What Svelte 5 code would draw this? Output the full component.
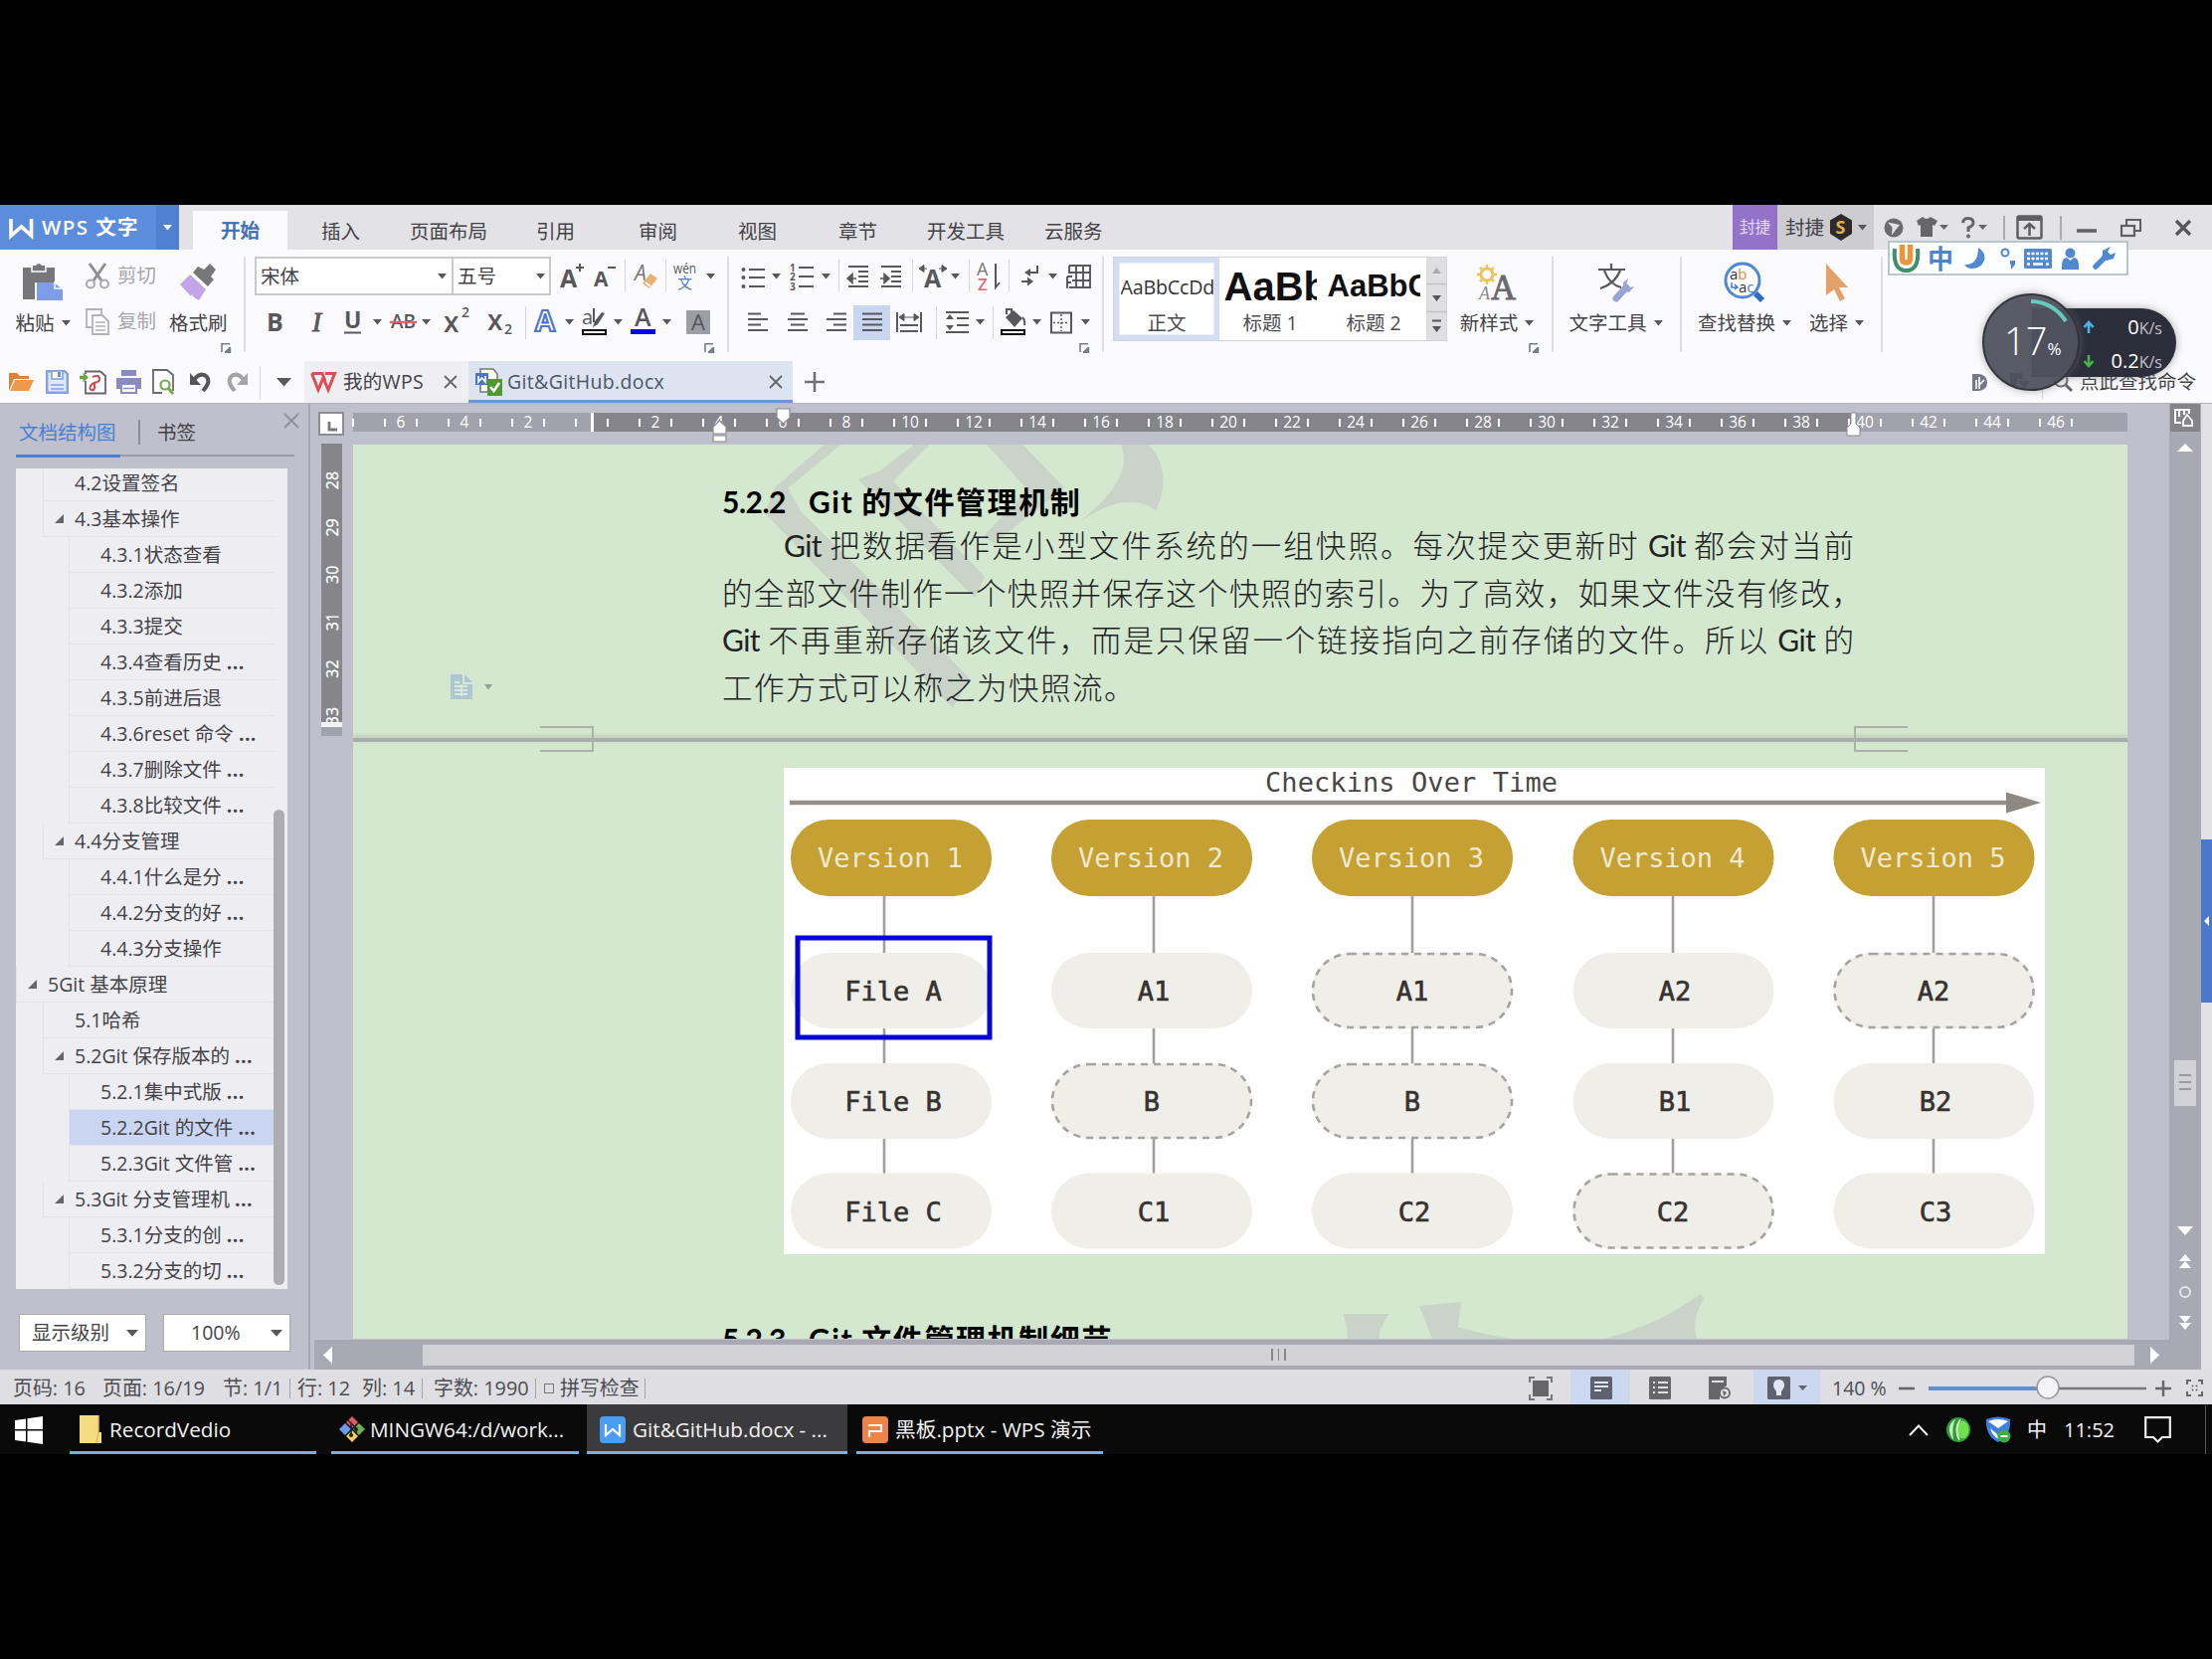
<script>
  // Icon library: [width, height, svg body]
  const G = '#58585c';
  const lines = (rows) => rows.map(([x1, x2, y]) => `<path d="M${x1} ${y}H${x2}" stroke="${G}" stroke-width="2"/>`).join('');
  const icons = {
    caret: [9, 6, `<path d="M0 0H9L4.5 5.5Z" fill="${G}"/>`],
    bigCaret: [15, 9, `<path d="M0 0H15L7.5 8.5Z" fill="${G}"/>`],
    whiteCaret: [9, 6, '<path d="M0 0H9L4.5 5.5Z" fill="#fff"/>'],
    logo: [25, 20, '<path d="M2 1V18L12.500 9L22.500 18V1" fill="none" stroke="#fff" stroke-width="3.600"/>'],
    paste: [40, 40, '<path d="M0 5H10V3H13Q16 -1 19 3H22V5H32V20H12V37H0Z" fill="#77777a"/><path d="M9 5V9H23V5" fill="none" stroke="#fbfbfd" stroke-width="1.500"/><path d="M14 20H31L40 27V38H14Z" fill="#7f9de6"/><path d="M32 19V26H40" fill="none" stroke="#fbfbfd" stroke-width="1.500"/>'],
    cut: [24, 27, '<path d="M4 1L16 18M20 1L8 18" stroke="#8f8f93" stroke-width="3"/><circle cx="5" cy="21.500" r="4" fill="none" stroke="#a9a9ad" stroke-width="2"/><circle cx="19" cy="21.500" r="4" fill="none" stroke="#a9a9ad" stroke-width="2"/>'],
    copy: [24, 27, '<path d="M6 19H1V1H16V6" fill="none" stroke="#b3b3b7" stroke-width="1.800"/><path d="M7 7H17L23 13V26H7Z" fill="#fbfbfd" stroke="#b3b3b7" stroke-width="1.800"/><path d="M10 14H20M10 18H20M10 22H20" stroke="#b3b3b7" stroke-width="1.500"/>'],
    brush: [38, 38, '<path d="M25 6L31 0L37 6L32 13L35 16L29 23L14 9L19 3Z" fill="#77777a"/><path d="M11 11L27 26L20 37L15 34L13 31L12 33L1 21Z" fill="#c3a4ea"/>'],
    launch: [9, 10, '<path d="M0 9V0.800H8" fill="none" stroke="#777c90" stroke-width="1.600"/><path d="M3 9H8.200V4M4 9L8 5" fill="none" stroke="#777c90" stroke-width="2"/>'],
    bold: [18, 26, `<text x="0" y="22" font-size="25" font-weight="700" fill="${G}">B</text>`],
    italic: [16, 26, `<text x="2" y="22" font-size="27" font-style="italic" font-family="Liberation Serif" stroke="${G}" stroke-width=".9" fill="${G}">I</text>`],
    under: [18, 26, `<text x="0" y="19" font-size="23" font-weight="700" fill="${G}">U</text><path d="M0 23.500H17" stroke="${G}" stroke-width="2"/>`],
    strike: [28, 24, `<text x="1" y="18" font-size="19" font-weight="600" textLength="25" lengthAdjust="spacingAndGlyphs" fill="${G}">AB</text><path d="M0 12H27" stroke="#d9666a" stroke-width="2.400"/>`],
    sup: [28, 28, `<text x="0" y="24" font-size="28" font-weight="600" fill="${G}">x</text><text x="18" y="9" font-size="14" font-weight="600" fill="${G}">2</text>`],
    sub: [28, 28, `<text x="0" y="22" font-size="28" font-weight="600" fill="${G}">x</text><text x="17" y="26" font-size="14" font-weight="600" fill="${G}">2</text>`],
    outA: [24, 26, '<text x="1" y="22" font-size="29" font-weight="700" fill="#fff" stroke="#4f76cf" stroke-width="2.200">A</text>'],
    hilite: [26, 28, `<text x="0" y="16" font-size="20" fill="${G}">a</text><path d="M12 0V14" stroke="${G}" stroke-width="2"/><path d="M23 5L16 16L11 19L13 13L20 4Z" fill="${G}"/><rect x="1" y="22" width="23" height="4" fill="#fff" stroke="#111" stroke-width="2"/>`],
    colorA: [26, 28, `<text x="4" y="18" font-size="25" font-weight="600" fill="${G}">A</text><rect x="0" y="21" width="25" height="5" fill="#0808ee"/>`],
    boxA: [24, 24, '<rect width="24" height="24" fill="#9d9da4"/><text x="5" y="20" font-size="22" fill="#55555a">A</text>'],
    grow: [26, 28, `<text x="0" y="25" font-size="25" font-weight="700" fill="${G}">A</text><path d="M16 5H24M20 1V9" stroke="${G}" stroke-width="2"/>`],
    shrink: [26, 28, `<text x="0" y="24" font-size="21" font-weight="700" fill="${G}">A</text><path d="M14 5H22" stroke="${G}" stroke-width="2"/>`],
    eraser: [24, 28, '<text x="0" y="18" font-size="21" font-style="italic" fill="#77777b">A</text><path d="M16 11L23 16L15 26L8 21Z" fill="#e8b06e"/><path d="M11 20L16 24" stroke="#fff" stroke-width="2"/>'],
    wen: [24, 30, `<text x="0" y="12" font-size="15" textLength="23" lengthAdjust="spacingAndGlyphs" fill="${G}">wén</text><text x="4" y="27" font-size="15" fill="#4f7fd6">文</text>`],
    bullets: [24, 28, `${lines([[8, 24, 7], [8, 24, 15], [8, 24, 24]])}<circle cx="2.500" cy="7" r="2" fill="${G}"/><circle cx="2.500" cy="15" r="2" fill="${G}"/><circle cx="2.500" cy="24" r="2" fill="${G}"/>`],
    numbers: [24, 30, `${lines([[9, 24, 6], [9, 24, 15], [9, 24, 25]])}<text x="0" y="10" font-size="10" font-weight="700" fill="${G}">1</text><text x="0" y="19" font-size="10" font-weight="700" fill="${G}">2</text><text x="0" y="29" font-size="10" font-weight="700" fill="${G}">3</text>`],
    outdent: [22, 24, `${lines([[1, 21, 2], [11, 21, 7], [11, 21, 12], [11, 21, 17], [1, 21, 22]])}<path d="M0 14L5 9.500V18.500ZM4 14H9" fill="${G}" stroke="${G}" stroke-width="1.500"/>`],
    indent: [22, 24, `${lines([[1, 21, 2], [11, 21, 7], [11, 21, 12], [11, 21, 17], [1, 21, 22]])}<path d="M9 14L4 9.500V18.500ZM5 14H0" fill="${G}" stroke="${G}" stroke-width="1.500"/>`],
    charScale: [28, 26, `<text x="5" y="24" font-size="25" font-weight="700" fill="${G}">A</text><path d="M0 5L5 1.500V8.500ZM28 5L23 1.500V8.500ZM4 5H8M20 5H24" fill="${G}" stroke="${G}" stroke-width="1"/>`],
    sort: [25, 28, `<text x="1" y="13" font-size="18" fill="#77777b">A</text><text x="2" y="28" font-size="17" font-weight="600" fill="#dc6c74">Z</text><path d="M20 1V25L24 20" fill="none" stroke="${G}" stroke-width="2"/>`],
    marks: [18, 24, `<path d="M16 1V8H6M0 17H9" fill="none" stroke="${G}" stroke-width="2"/><path d="M3 8L9 4V12ZM12 17L6 12.500V21.500Z" fill="${G}"/>`],
    tableGrid: [25, 26, `<path d="M3 2H24V24H3M10 2V24M17 2V24M3 2V10M3 9H24M6 17H24M1 13V25M1 13H6M1 19H5" fill="none" stroke="${G}" stroke-width="1.900"/>`],
    alignL: [22, 20, lines([[1, 14, 1.5], [1, 21, 7], [1, 14, 12.5], [1, 21, 18]])],
    alignC: [22, 20, lines([[4, 18, 1.5], [1, 21, 7], [4, 18, 12.5], [1, 21, 18]])],
    alignR: [22, 20, lines([[8, 21, 1.5], [1, 21, 7], [8, 21, 12.5], [1, 21, 18]])],
    alignJ: [22, 20, lines([[1, 21, 1.5], [1, 21, 7], [1, 21, 12.5], [1, 21, 18]])],
    distribute: [26, 22, `<path d="M1 1V21M25 1V21" stroke="${G}" stroke-width="2"/>${lines([[4, 22, 14], [4, 22, 20]])}<path d="M3 6L8 2.500V9.500ZM23 6L18 2.500V9.500ZM8 6H18" fill="${G}" stroke="${G}"/>`],
    spacing: [24, 24, `${lines([[1, 24, 2], [12, 24, 8], [12, 24, 15], [1, 24, 22]])}<path d="M5 4L9 9H1ZM5 20L9 15H1Z" fill="${G}"/>`],
    bucket: [26, 28, `<path d="M5 9L13 2L22 10L14 19Z" fill="${G}"/><path d="M6 6V1H11V6M22 9Q25 12 24 17" fill="none" stroke="${G}" stroke-width="2"/><rect x="1" y="22" width="23" height="4" fill="#fff" stroke="#111" stroke-width="2"/>`],
    border: [22, 23, `<rect x="1" y="1.500" width="20" height="20" fill="none" stroke="${G}" stroke-width="2"/><path d="M11 3V20M3 11.500H19" stroke="${G}" stroke-width="1.500" stroke-dasharray="2 2"/>`],
    newStyle: [40, 38, `<circle cx="10" cy="11" r="6" fill="none" stroke="#f0c25a" stroke-width="3"/><path d="M10 1V4M10 18V21M0 11H3M17 11H20M3 4L5 6M15 16L17 18M17 4L15 6M5 16L3 18" stroke="#f0c25a" stroke-width="2.500"/><text x="2" y="36" font-size="18" font-style="italic" font-family="Liberation Serif" fill="#8b8b90">A</text><text x="14" y="36" font-size="36" font-family="Liberation Serif" stroke="#6a6a6e" fill="#6a6a6e" textLength="25" lengthAdjust="spacingAndGlyphs">A</text>`],
    textTool: [36, 38, `<path d="M13 0V6M0 6H27M6 7Q11 21 23 24M22 7Q17 20 2 25" fill="none" stroke="${G}" stroke-width="2.200"/><path d="M18 35L28 24" stroke="#9ba5d3" stroke-width="7" stroke-linecap="round"/><path d="M30 15L25 19V27L31 29L36 23L31 24L28 22Z" fill="#9ba5d3"/>`],
    find: [42, 42, `<circle cx="19" cy="19" r="17" fill="#fff" stroke="#4d87d6" stroke-width="3"/><path d="M32 32L39 39" stroke="#2f6cc8" stroke-width="6"/><text x="6" y="18" font-size="15" fill="#333">a<tspan fill="#e08a3c">b</tspan></text><text x="15" y="31" font-size="15" fill="#333">a<tspan fill="#3f7fd6">c</tspan></text><path d="M8 21V26H14M11 23L14 26L11 28" stroke="#3f7fd6" stroke-width="1.500" fill="none"/>`],
    select: [24, 38, '<path d="M1 0L23 24H14L20 35L15 38L9 26L1 32Z" fill="#e3a069"/>'],
    globe: [20, 20, '<circle cx="10" cy="10" r="9.500" fill="#6b6b6f"/><path d="M4 4.500L16 7L12 12L8 17.500L8.500 9.500Z" fill="#e3e2e6"/>'],
    shirt: [21, 21, '<path d="M6 0Q10 4 14 0L21 4L18 9L16 8V20H4V8L2 9L0 4Z" fill="#66666a"/>'],
    smallCaret: [9, 6, `<path d="M0 0H9L4.500 5Z" fill="#66666a"/>`],
    help: [14, 22, '<path d="M1.500 6Q2 1.500 7 1.500Q12 1.500 12 6Q12 9 7 11V15" fill="none" stroke="#66666a" stroke-width="3"/><circle cx="7" cy="19.500" r="2" fill="#66666a"/>'],
    upBox: [27, 25, '<rect x="1.500" y="1.500" width="24" height="22" rx="1.500" fill="none" stroke="#5f5f63" stroke-width="2.500"/><path d="M1 4H26" stroke="#5f5f63" stroke-width="4"/><path d="M13.500 21V10M8 14L13.500 9L19 14" fill="none" stroke="#5f5f63" stroke-width="2.500"/>'],
    mini: [20, 20, '<path d="M0 13H20" stroke="#5f5f63" stroke-width="3.500"/>'],
    restore: [21, 18, '<path d="M6 6V1H20V12H15" fill="none" stroke="#5f5f63" stroke-width="2"/><rect x="1" y="7" width="13" height="10" fill="none" stroke="#5f5f63" stroke-width="2.200"/>'],
    close: [18, 18, '<path d="M2 2L16 16M16 2L2 16" stroke="#55555a" stroke-width="3.200"/>'],
    hex: [24, 27, '<path d="M12 0L23 6.500V20L12 27L1 20V6.500Z" fill="#2e2a2a"/><text x="6.500" y="20" font-size="18" font-weight="700" fill="#e6b04a">S</text>'],
    open: [26, 20, '<path d="M1 19V1H9L12 4H21V7H6Z" fill="#d98439"/><path d="M7 8H26L21 19H2Z" fill="#ec9a4c"/>'],
    save: [23, 24, '<path d="M1.200 1.200H19L21.800 4V22.800H1.200Z" fill="#dfe8fb" stroke="#86a0e0" stroke-width="2.400"/><rect x="6" y="1" width="11" height="8" fill="#fff" stroke="#86a0e0" stroke-width="1.600"/><rect x="12" y="2" width="3" height="5" fill="#6f8fd8"/><path d="M5 15H18M5 19H18" stroke="#86a0e0" stroke-width="1.600"/>'],
    pdf: [27, 25, `<path d="M6 11V23.500H26V6L21 1.500H6V4" fill="#fff" stroke="#67676b" stroke-width="1.800"/><path d="M0 7.500H6" stroke="#6fa343" stroke-width="3.500"/><path d="M3.500 2.500L9 7.500L3.500 12.500Z" fill="#6fa343"/><path d="M13 7Q20 4 20 9Q20 12 16 12.500Q11 14 10.500 18Q11 21 14 20Q16 18 15 14" fill="none" stroke="#cf4a4f" stroke-width="2"/>`],
    print: [25, 24, '<rect x="5" y="0" width="15" height="6" fill="#8b8ac2"/><path d="M0 8H25V19H0Z" fill="#8b8ac2"/><rect x="5" y="14" width="15" height="9" fill="#fff" stroke="#8b8ac2" stroke-width="2"/><path d="M7 18.500H18" stroke="#8b8ac2" stroke-width="1.500"/>'],
    preview: [23, 26, '<path d="M10 24H1V1H15L21 6V22" fill="none" stroke="#6b6b6f" stroke-width="1.800"/><circle cx="13" cy="16" r="4.500" fill="none" stroke="#76ab48" stroke-width="2.200"/><path d="M16 19L21 25" stroke="#76ab48" stroke-width="3"/>'],
    undo: [22, 22, '<path d="M4 9Q10 1 16 5Q22 10 13 20" fill="none" stroke="#55555a" stroke-width="4"/><path d="M0 2V14H11Z" fill="#55555a"/>'],
    redo: [22, 22, '<path d="M18 9Q12 1 6 5Q0 10 9 20" fill="none" stroke="#a3a3a8" stroke-width="4"/><path d="M22 2V14H11Z" fill="#a3a3a8"/>'],
    wpsRed: [26, 20, '<path d="M1.500 1.500H12L15 9M1.500 1.500L8 18L13 6L18 18L24.500 1.500H15" fill="none" stroke="#d94f57" stroke-width="3"/>'],
    tabX: [14, 14, '<path d="M1 1L13 13M13 1L1 13" stroke="#66666b" stroke-width="1.800"/>'],
    docIcon: [27, 28, '<path d="M5 1H18L22 6V24H5Z" fill="#fff" stroke="#77777c" stroke-width="1.600"/><rect x="0" y="5" width="13" height="12" fill="#4c74c4"/><path d="M3 8V14L6.500 10L10 14V8" fill="none" stroke="#fff" stroke-width="1.600"/><rect x="12" y="11" width="15" height="17" fill="#4f9a2e"/><path d="M15 19L18.500 23L24 15" fill="none" stroke="#fff" stroke-width="2.600"/>'],
    plus: [20, 20, '<path d="M10 0V20M0 10H20" stroke="#707075" stroke-width="2.600"/>'],
    dBadge: [15, 17, '<path d="M0 0H7Q15 1 15 8.500Q15 16 7 17H0Z" fill="#77778a"/><path d="M4 15V6M7 15V3M7 11L12 6" stroke="#fff" stroke-width="1.600"/>'],
    skin: [20, 18, '<path d="M0 0H13V6H7V13H0Z" fill="#44444a"/><path d="M8 8H20L14 16Z" fill="#44444a"/>'],
    search: [20, 20, '<circle cx="8" cy="8" r="6.500" fill="none" stroke="#66666a" stroke-width="2"/><path d="M13 13L19 19" stroke="#66666a" stroke-width="3"/>'],
    fold: [10, 10, '<path d="M9 0V9H0Z" fill="#66666c"/>'],
    fit: [24, 24, '<rect x="4" y="4" width="16" height="16" fill="#66666b"/><path d="M1 6V1H6M18 1H23V6M23 18V23H18M6 23H1V18" fill="none" stroke="#77777c" stroke-width="2"/>'],
    pageView: [22, 23, '<rect width="22" height="23" rx="1.500" fill="#5d626e"/><path d="M4 6H18M4 10H18M4 14H11" stroke="#dfe6f5" stroke-width="1.800"/>'],
    outline: [22, 23, '<rect width="22" height="23" rx="1.500" fill="#66666b"/><path d="M4 6H6M9 6H19M4 11H6M9 11H19M4 16H6M9 16H19" stroke="#e0dfe4" stroke-width="2"/>'],
    web: [22, 23, '<path d="M0 0H18V9L11 14V23H0Z" fill="#66666b"/><path d="M3 5H15" stroke="#e0dfe4" stroke-width="2"/><circle cx="16" cy="16.500" r="5" fill="#e0dfe4" stroke="#66666b" stroke-width="1.800"/><path d="M14 14L18 16L15 20Z" fill="#66666b"/>'],
    bulb: [23, 23, '<rect width="23" height="23" rx="1.500" fill="#5d626e"/><path d="M11.500 3Q17 3 17 9Q17 11 14 15V19H9V15Q6 11 6 9Q6 3 11.500 3Z" fill="#dfe6f5"/>'],
    minus: [16, 4, '<path d="M0 2H16" stroke="#66666b" stroke-width="2.600"/>'],
    plusS: [16, 16, '<path d="M0 8H16M8 0V16" stroke="#66666b" stroke-width="2.400"/>'],
    expand: [17, 17, '<path d="M1 5V1H5M12 1H16V5M16 12V16H12M5 16H1V12M6 6L7 7M11 6L10 7M6 11L7 10M11 11L10 10" fill="none" stroke="#66666b" stroke-width="2"/>'],
    win: [28, 28, '<path d="M0 4L11 2.400V13H0ZM12.500 2.200L28 0V13H12.500ZM0 14.500H11V25.500L0 24ZM12.500 14.500H28V28L12.500 25.800Z" fill="#fff"/>'],
    folder: [22, 28, '<path d="M0 0H19V17H22V28H0Z" fill="#f5dc82"/><path d="M19 0V17L17 28" stroke="#e0bd58" stroke-width="1.500" fill="none"/>'],
    gitBash: [26, 26, '<path d="M13 0L19 6L13 12L7 6Z" fill="#dd5a64"/><path d="M6 7L12 13L6 19L0 13Z" fill="#6c9cf0"/><path d="M20 7L26 13L20 19L14 13Z" fill="#6bb04c"/><path d="M13 14L19 20L13 26L7 20Z" fill="#efcf5d"/><path d="M9 4L17 12V17M12 8V19" fill="none" stroke="#222" stroke-width="1.600"/><circle cx="17" cy="13" r="2" fill="#222"/><circle cx="12" cy="19" r="2" fill="#222"/>'],
    taskW: [26, 27, '<rect width="26" height="27" rx="4" fill="#4a9df0"/><path d="M6 8V19L13 13L20 19V8" fill="none" stroke="#fff" stroke-width="2.200"/>'],
    taskP: [26, 27, '<rect width="26" height="27" rx="4" fill="#ee8247"/><path d="M6 9H19V15H7V21" fill="none" stroke="#fff" stroke-width="2.200"/>'],
    up: [20, 12, '<path d="M1 11L10 1.500L19 11" fill="none" stroke="#eee" stroke-width="2"/>'],
    green: [24, 25, '<ellipse cx="12" cy="12.500" rx="12" ry="12.500" fill="#2f9e38"/><path d="M9 1.500Q-2 10 7 23Q5 10 9 1.500Z" fill="#c5efc0"/><ellipse cx="16.500" cy="12.500" rx="6" ry="9" fill="#6fe04e"/><path d="M14 2Q7 12 13 23" stroke="#e9ffe4" stroke-width="1.600" fill="none"/>'],
    shield: [26, 27, '<path d="M1 3Q13 -2 25 3Q26 20 13 26Q0 20 1 3Z" fill="#3f7fe0"/><path d="M3 5Q13 1 23 5L13 12ZM5 12L12 18L14 23Q7 20 5 12Z" fill="#fff"/><circle cx="19" cy="20" r="6.500" fill="#3fae3d"/><path d="M15.500 20H22.500" stroke="#fff" stroke-width="2"/>'],
    message: [27, 27, '<path d="M1.200 1.200H25.800V21H18L13.500 25.500L9 21H1.200Z" fill="none" stroke="#eee" stroke-width="2.200"/>'],
    imeU: [29, 31, '<path d="M3 6Q1 28 14.500 28Q28 28 26 6" fill="none" stroke="#3f8f6b" stroke-width="4"/><path d="M10.500 2V16Q10.500 20 14.500 20Q18.500 20 18.500 16V2" fill="none" stroke="#e9963e" stroke-width="5.500"/>'],
    moon: [22, 22, '<path d="M14 0Q22 5 20 13Q16 22 6 21Q2 20 0 17Q14 18 14 0Z" fill="#5089cf"/>'],
    punct: [17, 22, '<circle cx="5" cy="5" r="3.500" fill="none" stroke="#5089cf" stroke-width="2"/><path d="M10 13H15V17L11 22V17H10Z" fill="#5089cf"/>'],
    keyboard: [28, 20, '<rect width="28" height="20" rx="1.500" fill="#5089cf"/><path d="M3 5H25M3 10H25" stroke="#fff" stroke-width="2.500" stroke-dasharray="3 1.500"/><path d="M3 15.500H6M9 15.500H19M22 15.500H25" stroke="#fff" stroke-width="2.500"/>'],
    person: [17, 22, '<circle cx="8.500" cy="5.500" r="5" fill="#5089cf"/><path d="M0 22V16Q1 10 5 10L8.500 13L12 10Q16 10 17 16V22Z" fill="#5089cf"/>'],
    wrench: [23, 23, '<path d="M3 20L14 9" stroke="#5089cf" stroke-width="5.500" stroke-linecap="round"/><path d="M18 0L10 4V11L14 14L21 12L23 6L18 8L15 5Z" fill="#5089cf"/>'],
    anchor: [22, 25, '<path d="M0 0H14L22 8V25H0Z" fill="#a9c3cf"/><path d="M13 0V9H22M4 8H9M4 12H17M4 16H17M4 20H17M11 10V22" fill="none" stroke="#dcebdc" stroke-width="1.800"/>'],
    fadedCaret: [8, 6, '<path d="M0 0H8L4 5.500Z" fill="#8d988c"/>'],
    panelX: [16, 16, '<path d="M1 1L15 15M15 1L1 15" stroke="#8f8f98" stroke-width="1.800"/>'],
  };

  const tree = [
    [2, '4.2设置签名'], [2, '4.3基本操作', 1], [3, '4.3.1状态查看'], [3, '4.3.2添加'], [3, '4.3.3提交'],
    [3, '4.3.4查看历史 ...'], [3, '4.3.5前进后退'], [3, '4.3.6reset 命令 ...'], [3, '4.3.7删除文件 ...'],
    [3, '4.3.8比较文件 ...'], [2, '4.4分支管理', 1], [3, '4.4.1什么是分 ...'], [3, '4.4.2分支的好 ...'],
    [3, '4.4.3分支操作'], [1, '5Git 基本原理', 1], [2, '5.1哈希'], [2, '5.2Git 保存版本的 ...', 1],
    [3, '5.2.1集中式版 ...'], [3, '5.2.2Git 的文件 ...', 0, 1], [3, '5.2.3Git 文件管 ...'],
    [2, '5.3Git 分支管理机 ...', 1], [3, '5.3.1分支的创 ...'], [3, '5.3.2分支的切 ...'],
  ];

  const menus = ['插入', '页面布局', '引用', '审阅', '视图', '章节', '开发工具', '云服务'];
  const fontTop = ['grow', 'shrink', '|', 'eraser', '|', 'wen', 'caret'];
  const fontBottom = ['bold', 'italic', 'under', 'caret', 'strike', 'caret', 'sup', 'sub', '|', 'outA', 'caret', 'hilite', 'caret', 'colorA', 'caret', 'boxA'];
  const paraTop = ['bullets', 'caret', 'numbers', 'caret', '|', 'outdent', 'indent', '|', 'charScale', 'caret', '|', 'sort', '|', 'marks', 'caret', 'tableGrid'];
  const paraBottom = ['alignL', 'alignC', 'alignR', '*alignJ', 'distribute', '|', 'spacing', 'caret', '|', 'bucket', 'caret', 'border', 'caret'];
  const winTools = ['globe', 'shirt', 'smallCaret', 'help', 'smallCaret', '|', 'upBox', '|', 'mini', 'restore', 'close'];
  const quick = ['open', 'save', 'pdf', 'print', 'preview', 'undo', 'redo', '|', 'bigCaret'];

  // Ruler geometry: one unit is 32px, zero sits at x = 240
  const unit = 32;
  const labels = [-6, -4, -2, ...Array.from({ length: 23 }, (_, i) => (i + 1) * 2)];
  const ticks = Array.from({ length: 55 }, (_, i) => i - 7.5).filter((t) => t < 48.5);
  const vLabels = [28, 29, 30, 31, 32, 33];

  // Diagram: columns of the snapshot chart; the second cell value marks a dashed (unchanged) file
  const cols = [
    { x: 7, line: 101, cells: [['File A', 0, 110], ['File B', 0, 110], ['File C', 0, 110]] },
    { x: 269, line: 372, cells: [['A1', 0, 372], ['B', 1, 370], ['C1', 0, 372]] },
    { x: 531, line: 632, cells: [['A1', 1, 632], ['B', 1, 632], ['C2', 0, 634]] },
    { x: 793.5, line: 894, cells: [['A2', 0, 896], ['B1', 0, 896], ['C2', 1, 894]] },
    { x: 1055.5, line: 1156, cells: [['A2', 1, 1156], ['B2', 0, 1158], ['C3', 0, 1158]] },
  ];
  const rowY = [186, 297, 407.5];
</script>

{#snippet icon(name)}
  <svg class="ico" width={icons[name][0]} height={icons[name][1]} viewBox="0 0 {icons[name][0]} {icons[name][1]}">{@html icons[name][2]}</svg>
{/snippet}

{#snippet tools(list)}
  {#each list as t}
    {#if t === '|'}<i class="sep"></i>
    {:else if t[0] === '*'}<span class="pressed">{@render icon(t.slice(1))}</span>
    {:else}{@render icon(t)}{/if}
  {/each}
{/snippet}

{#snippet big(name, label, caret)}
  <div class="big">
    <span class="pic">{@render icon(name)}</span>
    <span class="lab">{label}{#if caret}{@render icon('caret')}{/if}</span>
  </div>
{/snippet}

<div class="screen">
  <div class="titlebar">
    <div class="brand"><span class="brand-main">{@render icon('logo')}<b>WPS 文字</b></span><span class="brand-drop">{@render icon('whiteCaret')}</span></div>
    <div class="tab-active">开始</div>
    <nav class="menus">{#each menus as m}<span>{m}</span>{/each}</nav>
    <div class="avatar">封捷</div>
    <div class="user">封捷{@render icon('hex')}{@render icon('caret')}</div>
    <div class="wintools">{@render tools(winTools)}</div>
  </div>

  <div class="ribbon">
    <section class="group clip">
      {@render big('paste', '粘贴', true)}
      <div class="pair">
        <span>{@render icon('cut')}剪切</span>
        <span>{@render icon('copy')}复制</span>
      </div>
      {@render big('brush', '格式刷', false)}
      <span class="launch">{@render icon('launch')}</span>
    </section>
    <section class="group font">
      <div class="row font-top">
        <div class="selects"><span class="sel family">宋体{@render icon('caret')}</span><span class="sel size">五号{@render icon('caret')}</span></div>
        {@render tools(fontTop)}
      </div>
      <div class="row font-bottom">{@render tools(fontBottom)}</div>
      <span class="launch">{@render icon('launch')}</span>
    </section>
    <section class="group para">
      <div class="row para-top">{@render tools(paraTop)}</div>
      <div class="row para-bottom">{@render tools(paraBottom)}</div>
      <span class="launch">{@render icon('launch')}</span>
    </section>
    <section class="group styles">
      <div class="gallery">
        <div class="style on"><span class="sample s0">AaBbCcDd</span><span class="cap">正文</span></div>
        <div class="style"><span class="sample s1">AaBb</span><span class="cap">标题 1</span></div>
        <div class="style"><span class="sample s2">AaBbC</span><span class="cap">标题 2</span></div>
        <div class="gscroll">
          <svg width="21" height="83" viewBox="0 0 21 83"><path d="M6 16H15L10.500 10Z" fill="#aaaaae" /><path d="M6 38H15L10.500 44ZM6 69H15L10.500 75Z" fill="#55555a" /><path d="M6 63.500H15" stroke="#55555a" stroke-width="2" /><path d="M0 26.500H21M0 54.500H21" stroke="#c3c3c7" stroke-width="1.500" /></svg>
        </div>
      </div>
      {@render big('newStyle', '新样式', true)}
      <span class="launch">{@render icon('launch')}</span>
    </section>
    <section class="group text-tools">{@render big('textTool', '文字工具', true)}</section>
    <section class="group finder">{@render big('find', '查找替换', true)}{@render big('select', '选择', true)}</section>
  </div>

  <div class="tabbar">
    <div class="quick">{@render tools(quick)}</div>
    <div class="doctab home">{@render icon('wpsRed')}<span>我的WPS</span>{@render icon('tabX')}</div>
    <div class="doctab current">{@render icon('docIcon')}<span>Git&amp;GitHub.docx</span>{@render icon('tabX')}</div>
    <div class="newtab">{@render icon('plus')}</div>
    <div class="command">{@render icon('dBadge')}{@render icon('skin')}<i class="sep"></i>{@render icon('search')}<span>点此查找命令</span></div>
  </div>

  <div class="work">
    <aside>
      <div class="side-tabs"><span class="st-on">文档结构图</span><i></i><span class="st">书签</span><span class="st-x">{@render icon('panelX')}</span></div>
      <div class="outline">
        <ul>
          {#each tree as [level, label, open, on]}
            <li class="l{level}" class:on>
              <span class="cell"><span class="fold">{#if open}{@render icon('fold')}{/if}</span>{label.replace('...', '')}{#if label.endsWith('...')}<b class="dots">...</b>{/if}</span>
            </li>
          {/each}
        </ul>
        <div class="thumb"></div>
      </div>
      <div class="side-foot">
        <span class="drop">显示级别{@render icon('bigCaret')}</span>
        <span class="drop pct">100%{@render icon('bigCaret')}</span>
      </div>
    </aside>

    <main>
      <div class="upper">
        <div class="canvas">
          <div class="rulers">
            <span class="corner"><svg width="24" height="22" viewBox="0 0 24 22"><path d="M10 9V17H18" fill="none" stroke="#77777c" stroke-width="2.800" /></svg></span>
            <svg class="hruler" width="1784" height="42" viewBox="0 0 1784 42">
              <rect y="10" width="1784" height="19" fill="#a2a2ac" />
              <rect x="240" y="10" width="1268" height="19" fill="#85858b" />
              <rect x="239" y="10" width="3" height="19" fill="#fff" />
              {#each ticks as t}<path d="M{240 + t * unit} 16V24" stroke="#fff" stroke-width="2" />{/each}
              {#each labels as n}<text x={240 + n * unit} y="25" text-anchor="middle" font-size="15.500" fill="#fff">{Math.abs(n)}</text>{/each}
              <path d="M362 31V24L368.500 18L375 24V31ZM362 33H375V39H362Z" fill="#fff" stroke="#8a8a90" stroke-width="1.200" />
              <path d="M426 6H439V15L432.500 21L426 15Z" fill="#fff" stroke="#8a8a90" stroke-width="1.200" />
              <path d="M1506 10H1511V21L1515 25V33H1502V25L1506 21Z" fill="#fff" stroke="#8a8a90" stroke-width="1" />
            </svg>
          </div>
          <div class="sheet">
            <svg class="vruler" width="21" height="294" viewBox="0 0 21 294">
              <rect width="21" height="280" fill="#85858b" />
              {#each vLabels as n, i}<text transform="translate(17 {37 + i * 47.4}) rotate(-90)" text-anchor="middle" font-size="16" fill="#fff" stroke="#fff" stroke-width=".3">{n}</text>{/each}
              <rect y="280" width="21" height="5" fill="#f4f4f6" />
              <rect y="285" width="21" height="9" fill="#a2a2ac" />
            </svg>
            <div class="page">
              <svg class="watermark" width="1784" height="899" viewBox="355 447 1784 899">
                <g fill="#c9d3c8">
                  <path d="M829 447H845L792 491L806 515L975 682L958 712L769 516L779 490Z" />
                  <path d="M919 447H935L898 484L990 580L980 601L863 482L884 474Z" />
                  <path d="M992 447H1028L1070 490L1000 546L988 540L1033 492Z" />
                  <path d="M1127 447H1155Q1180 476 1162 513Q1132 492 1085 525Q1142 480 1127 447Z" />
                  <path d="M1350.500 1321H1396L1387 1338V1346H1355L1354 1333Z" />
                  <path d="M1427 1313L1469 1309L1466 1334Q1487 1341 1520 1346H1440Z" />
                  <path d="M1710 1301L1713 1305Q1700 1328 1706 1346H1612Q1664 1334 1710 1301Z" />
                </g>
              </svg>
              <h2><span>5.2.2</span>Git 的文件管理机制</h2>
              <div class="body">
                <p class="first"><em>Git</em> 把数据看作是小型文件系统的一组快照。每次提交更新时 <em>Git</em> 都会对当前</p>
                <p class="full">的全部文件制作一个快照并保存这个快照的索引。为了高效，如果文件没有修改，</p>
                <p><em>Git</em> 不再重新存储该文件，而是只保留一个链接指向之前存储的文件。所以 <em>Git</em> 的</p>
                <p class="last">工作方式可以称之为快照流。</p>
              </div>
              <span class="anchor">{@render icon('anchor')}{@render icon('fadedCaret')}</span>
              <div class="break"><i class="mark left"></i><i class="mark right"></i></div>
              <svg class="diagram" width="1268" height="489" viewBox="0 0 1268 489">
                <rect width="1268" height="489" fill="#fff" />
                <text class="mono" x="631" y="23.500" textLength="294" fill="#4a4644">Checkins Over Time</text>
                <path d="M6 35H1232" stroke="#979089" stroke-width="4.500" />
                <path d="M1229 24.500L1264 35L1229 45.500Z" fill="#8f8882" />
                {#each cols as c, i}
                  <path d="M{c.line} 128V440" stroke="#a39e9b" stroke-width="2.600" />
                  <rect x={c.x} y="52" width="202" height="77" rx="38" fill="#c5a033" />
                  <text class="mono" x={c.x + 100} y="100" textLength="146" fill="#efe9cf">Version {i + 1}</text>
                  {#each c.cells as [name, dashed, cx], r}
                    <rect x={c.x} y={rowY[r]} width="202" height="76" rx="38" fill="#efeee9" />
                    {#if dashed}<rect x={c.x + 1} y={rowY[r] + 1} width="200" height="74" rx="37" fill="none" stroke="#a6a3a3" stroke-width="2.600" stroke-dasharray="7 6" />{/if}
                    <text class="mono file" x={cx} y={rowY[r] + 48} fill="#35322f">{name}</text>
                  {/each}
                {/each}
                <rect x="14" y="171" width="193" height="100" fill="none" stroke="#0606d2" stroke-width="5" />
              </svg>
              <h2 class="next"><span>5.2.3</span>Git 文件管理机制细节</h2>
            </div>
          </div>
        </div>
        <div class="vscroll">
          <svg width="32" height="941" viewBox="0 1 32 941">
            <rect x="1" width="30" height="29" fill="#84848a" />
            <path d="M20 11V7H6V20H12M10 7V14M15 7V12" fill="none" stroke="#fff" stroke-width="2" /><path d="M18 12L23 18V23H14V18Z" fill="#84848a" stroke="#fff" stroke-width="1.800" />
            <path d="M8 49L16 41L24 49ZM8 828H24L16 837ZM10 863L16 856L22 863ZM10 870L16 863L22 870ZM10 918H22L16 925ZM10 925H22L16 932Z" fill="#fff" />
            <circle cx="16" cy="894" r="5" fill="none" stroke="#e6e6ea" stroke-width="2" />
            <rect x="5" y="661" width="22" height="46" fill="#d2d1d6" />
            <path d="M10 676H22M10 683H22M10 690H22" stroke="#88888e" stroke-width="1.500" />
          </svg>
        </div>
      </div>
      <div class="hscroll">
        <svg width="109" height="31" viewBox="0 0 109 31"><path d="M18 7V24L9 15.500Z" fill="#fff" /></svg>
        <div class="hthumb"><i></i><i></i><i></i></div>
        <svg width="67" height="31" viewBox="0 0 67 31"><path d="M16 7V24L25 15.500Z" fill="#fff" /></svg>
      </div>
    </main>
    <div class="strip"><div class="handle"><svg width="11" height="12" viewBox="0 0 11 12"><path d="M8 1V11L3 6Z" fill="#fff" /></svg></div></div>
  </div>

  <footer>
    <div class="stats">
      <span>页码: 16</span><span>页面: 16/19</span><span>节: 1/1</span><i></i><span>行: 12</span><span>列: 14</span><i></i><span>字数: 1990</span><i></i><b></b><span>拼写检查</span><i></i>
    </div>
    <div class="views">
      <span>{@render icon('fit')}</span>
      <span class="lit">{@render icon('pageView')}</span>
      <span>{@render icon('outline')}</span>
      <span>{@render icon('web')}</span>
      <span class="lit bulb">{@render icon('bulb')}{@render icon('smallCaret')}</span>
    </div>
    <div class="zoom">
      <span>140 %</span>{@render icon('minus')}
      <svg width="222" height="30" viewBox="0 0 222 30"><path d="M0 15H110" stroke="#5b8fd6" stroke-width="4" /><path d="M110 15H219" stroke="#77777c" stroke-width="2.600" /><circle cx="120" cy="14" r="11" fill="#f4f4f7" stroke="#97979c" stroke-width="1.500" /></svg>
      {@render icon('plusS')}{@render icon('expand')}
    </div>
  </footer>

  <div class="taskbar">
    <span class="start">{@render icon('win')}</span>
    <span class="task t1">{@render icon('folder')}<em>RecordVedio</em></span>
    <span class="task t2">{@render icon('gitBash')}<em>MINGW64:/d/work...</em></span>
    <span class="task t3">{@render icon('taskW')}<em>Git&amp;GitHub.docx - ...</em></span>
    <span class="task t4">{@render icon('taskP')}<em>黑板.pptx - WPS 演示</em></span>
    <div class="tray">{@render icon('up')}{@render icon('green')}{@render icon('shield')}<span>中</span><span>11:52</span>{@render icon('message')}<i></i></div>
  </div>

  <div class="ime">{@render icon('imeU')}<b>中</b>{@render icon('moon')}{@render icon('punct')}{@render icon('keyboard')}{@render icon('person')}{@render icon('wrench')}</div>

  <div class="meter">
    <div class="net">
      <svg width="12" height="13" viewBox="0 0 12 13"><path d="M6 13V3M1.500 7L6 2L10.500 7" fill="none" stroke="#4fb4ea" stroke-width="2.600" /></svg><span>0<small>K/s</small></span>
      <svg width="12" height="13" viewBox="0 0 12 13"><path d="M6 0V10M1.500 6L6 11L10.500 6" fill="none" stroke="#45b548" stroke-width="2.600" /></svg><span>0.2<small>K/s</small></span>
    </div>
    <div class="dial">
      <svg class="arc" width="98" height="98" viewBox="0 0 98 98"><path d="M49 8A41 41 0 0 1 84 28" fill="none" stroke="#62cdbd" stroke-width="4" /></svg>
      <span>17</span><small>%</small>
    </div>
  </div>
</div>

<style>
  :global(body) { background: #000; }
  .screen {
    position: relative; box-sizing: border-box; width: 2224px; height: 1668px; padding-top: 206px; overflow: hidden;
    display: flex; flex-direction: column; background: #000; color: #434347;
    font: 19.5px/1.2 'Open Sans', 'Noto Sans CJK SC', sans-serif; white-space: nowrap;
  }
  .screen * { box-sizing: border-box; }
  svg { display: block; flex: none; overflow: visible; }
  .sep { display: block; width: 1px; height: 33px; background: #d6d6da; }

  .titlebar { display: flex; height: 45px; background: #e3e2e6; flex: none; }
  .brand { display: flex; width: 180px; color: #fff; background: #5c8ddd; margin-right: 14px; }
  .brand-main { display: flex; align-items: center; width: 157px; padding: 0 0 0 9px; gap: 8px; font-size: 20.5px; }
  .brand-main b { font-weight: 600; letter-spacing: 1.4px; }
  .brand-drop { display: flex; flex: 1; align-items: center; justify-content: center; background: #4f81d0; }
  .tab-active { width: 95px; margin-top: 6px; background: #fbfbfd; color: #3f6fb8; font-weight: 500; display: flex; align-items: center; justify-content: center; padding-top: 1px; -webkit-text-stroke: .5px #3f6fb8; }
  .menus { display: grid; grid-template-columns: 89px 127px 103px 100px 101px 89px 118px 80px; padding: 8px 0 0 34px; align-items: center; }
  .avatar { margin-left: auto; width: 45px; background: #9273c9; color: #e4d9f6; font-size: 15.5px; display: flex; align-items: center; justify-content: center; }
  .user { width: 97px; background: #cdccd0; display: flex; align-items: center; padding-left: 8px; gap: 5px; }
  .wintools { width: 340px; padding-left: 10px; display: grid; align-items: center; grid-template-columns: 33px 23px 22px 17px 25px 13px 44px 17px 44px 54px 20px; }
  .wintools .sep { height: 24px; width: 2px; background: #a9a9ae; }

  .ribbon { display: flex; height: 112px; padding-top: 7px; background: #fbfbfd; flex: none; }
  .group { position: relative; height: 96px; border-right: 2px solid #dedee2; flex: none; }
  .launch { position: absolute; right: 13px; bottom: -1px; }
  .row { display: grid; align-items: center; height: 39px; }
  .row + .row { margin-top: 8px; height: 38px; }
  .big { display: flex; flex-direction: column; align-items: center; }
  .pic { height: 51px; display: flex; align-items: center; }
  .lab { height: 31px; display: flex; align-items: center; gap: 7px; }
  .clip { width: 247px; display: flex; padding-left: 15px; }
  .clip .big:first-child { width: 56px; }
  .pair { width: 84px; margin-left: 15px; color: #a6a6aa; }
  .pair span { height: 38px; display: flex; align-items: center; gap: 8px; margin-bottom: 8px; }
  .font { width: 486px; }
  .font-top { padding-left: 9px; grid-template-columns: 307px 34px 31px 10px 31px 8px 33px 10px; }
  .selects { display: flex; width: 298px; height: 39px; border: 2px solid #c9c9cd; }
  .sel { display: flex; align-items: center; justify-content: space-between; padding: 0 5px 0 4px; background: #fff; }
  .family { width: 198px; border-right: 2px solid #c9c9cd; }
  .size { flex: 1; padding-right: 4px; }
  .font-bottom { padding-left: 21px; grid-template-columns: 44px 34px 29px 17px 32px 22px 44px 38px 9px 31px 17px 32px 17px 32px 24px 24px; }
  .para { width: 377px; }
  .para-top { padding-left: 12px; grid-template-columns: 31px 18px 32px 17px 9px 33px 32px 7px 32px 18px 7px 33px 13px 27px 18px 25px; }
  .para-bottom { padding-left: 18px; grid-template-columns: 40px 39px 29px 42px 40px 9px 31px 17px 8px 32px 18px 31px 10px; }
  .para-bottom .pressed { margin-left: -1px; }
  .pressed { width: 37px; height: 35px; background: #c9d6f0; display: flex; align-items: center; justify-content: center; }
  .styles { width: 452px; display: flex; padding-left: 9px; gap: 12px; }
  .styles > :global(.big) { width: 76px; }
  .gallery { display: flex; width: 336px; height: 85px; border: 1px solid #d3d3d8; background: #fff; flex: none; }
  .style { width: 104px; display: flex; flex-direction: column; align-items: center; padding: 0 7px 0 5px; color: #111; flex: none; }
  .style.on { width: 106px; padding: 0 6px; box-shadow: inset 0 0 0 5.5px #d3ddf3; }
  .sample { width: 93px; height: 50px; overflow: hidden; display: flex; align-items: center; padding-top: 9px; }
  .s0 { font-size: 19.7px; color: #333; letter-spacing: -.2px; }
  .s1 { font: 700 40px/1 'Liberation Sans', sans-serif; padding-top: 8px; }
  .s2 { font: 700 31px/1 'Liberation Sans', sans-serif; padding-top: 6px; }
  .cap { height: 32px; line-height: 31px; color: #4c4c50; }
  .gscroll { width: 20px; background: #dfdfe2; margin-left: auto; }
  .text-tools { width: 129px; padding-left: 16px; }
  .text-tools > :global(.big) { width: 93px; }
  .finder { width: 202px; display: flex; padding-left: 16px; gap: 18px; }

  .tabbar { display: flex; height: 42px; background: #fbfbfd; flex: none; }
  .quick { width: 306px; padding-left: 8px; display: grid; align-items: center; grid-template-columns: 38px 34px 37px 36px 38px 36px 34px 17px 15px; }
  .doctab { display: flex; align-items: center; }
  .doctab span { flex: 1; }
  .home { width: 165px; background: #efeef2; padding: 0 11px 0 6px; gap: 7px; }
  .home span { letter-spacing: .3px; }
  .current { width: 326px; background: #dce4f2; border-bottom: 3px solid #6d96d3; padding: 2px 10px 0 7px; gap: 5px; color: #4b5566; }
  .current span { letter-spacing: .35px; }
  .newtab { padding-left: 12px; display: flex; align-items: center; }
  .command { margin-left: auto; width: 241px; display: grid; align-items: center; grid-template-columns: 38px 32px 11px 27px auto; }

  .work { display: flex; height: 972px; background: #c0c0cd; border-top: 1px solid #b4b4bf; flex: none; }
  aside { width: 312px; border-right: 2px solid #a9a9b5; padding-left: 16px; flex: none; }
  .side-tabs { display: flex; width: 280px; height: 53px; border-bottom: 2px solid #9c9ca6; align-items: center; }
  .st-on { color: #4b7fd2; height: 54px; padding: 17px 0 0 3px; width: 105px; border-bottom: 3px solid #4b7fd2; margin-bottom: -3px; }
  .side-tabs i { width: 2px; height: 25px; background: #8d8d96; margin: 6px 17px 0 18px; }
  .st { padding-top: 6px; }
  .st-x { margin: -17px -5px 0 auto; }
  .outline { position: relative; width: 273px; height: 825px; margin-top: 12px; overflow: hidden; background: #eeeef2; }
  ul { margin: -3px 0 0; padding: 0; list-style: none; }
  li { display: flex; height: 36px; width: 260px; }
  .cell { display: flex; flex: 1; align-items: center; border: solid #e2e2e7; border-width: 0 0 1px 1px; padding-top: 1px; white-space: pre; }
  .dots { font-weight: 700; letter-spacing: .4px; }
  .l2 .cell { margin-left: 27px; }
  .l3 .cell { margin-left: 53px; }
  .on .cell { background: #c9d5f1; }
  .fold { width: 31px; padding-left: 11px; flex: none; }
  .thumb { position: absolute; right: 3px; top: 343px; width: 11px; height: 478px; border-radius: 6px; background: #adadb1; }
  .side-foot { display: flex; gap: 17px; padding: 25px 0 0 3px; }
  .drop { width: 128px; height: 38px; background: #fff; border: 1px solid #a9a9b1; display: flex; align-items: center; justify-content: space-between; padding: 0 7px 0 12px; }
  .drop :global(svg) { width: 12px; }
  .pct { padding-left: 27px; }

  main { width: 1901px; display: flex; flex-direction: column; }
  .upper { display: flex; height: 941px; }
  .canvas { width: 1869px; }
  .rulers { display: flex; height: 42px; margin-top: -1px; }
  .corner { width: 24px; height: 22px; margin: 10px 10px 0 9px; background: #fff; outline: 2px solid #8d8d96; outline-offset: -1px; }
  .sheet { display: flex; height: 899px; }
  .vruler { margin: -1px 11px 0; }
  .page { position: relative; width: 1784px; height: 899px; overflow: hidden; background: #d4e7cf; color: #20231f; font-family: Lato, 'Noto Sans CJK SC', sans-serif; }
  .watermark { position: absolute; inset: 0; }
  h2 { position: relative; margin: 34px 0 0 371px; height: 44px; font-size: 30px; line-height: 46px; font-weight: 700; color: #000; letter-spacing: 1.6px; word-spacing: -1px; }
  h2 span { display: inline-block; width: 87px; letter-spacing: -.5px; }
  .body { position: relative; margin-left: 371px; width: 1138px; height: 190px; }
  p { margin: 0; height: 47.5px; line-height: 47.5px; font-size: 30.5px; font-weight: 300; text-align: justify; text-align-last: justify; white-space: normal; overflow: hidden; word-spacing: -2px; }
  p em { font-style: normal; font-weight: 400; font-size: 30px; letter-spacing: -.6px; }
  .full { width: 1146px; }
  .first { margin-left: 62px; }
  .last { text-align-last: left; letter-spacing: 1.5px; }
  .anchor { position: absolute; left: 98px; top: 231px; display: flex; align-items: center; gap: 12px; opacity: .9; }
  .break { position: relative; margin-top: 27px; height: 4px; background: #a6adac; box-shadow: 0 -2px 4px #b7c3b5; }
  .mark { position: absolute; top: -12px; height: 26px; width: 54px; border: 2px solid #aab2a9; }
  .left { left: 188px; border-left: 0; }
  .right { left: 1509px; border-right: 0; }
  .diagram { margin: 26px 0 0 433px; position: relative; }
  .mono { font: 27px 'DejaVu Sans Mono', monospace; text-anchor: middle; }
  .file { stroke: #35322f; stroke-width: .6px; }
  .next { margin-top: 62px; }
  .vscroll { width: 32px; background: #a9a9b3; overflow: hidden; }
  .hscroll { display: flex; align-items: center; height: 31px; margin-left: 4px; background: #a9a9b3; padding-bottom: 1px; }
  .hthumb { flex: 1; height: 21px; background: #d2d1d6; display: flex; align-items: center; justify-content: center; gap: 5px; }
  .hthumb i { width: 1.5px; height: 12px; background: #85858b; }
  .strip { flex: 1; background: #e1e0e5; padding-top: 438px; }
  .handle { height: 164px; background: #4b79c9; display: flex; align-items: center; }

  footer { display: flex; height: 35px; background: #dfdee3; flex: none; font-size: 19.9px; color: #4d4d52; padding-top: 2px; }
  .stats { display: grid; align-items: center; padding-left: 13px; grid-template-columns: 90px 121px 67px 8px 65px 60px 12px 102px 9px 16px 85px 4px; }
  .stats i { width: 1px; height: 20px; background: #a3a3a9; }
  .stats b { width: 10px; height: 10px; border: 1px solid #77777c; }
  .views { display: flex; margin: -2px 0 0 867px; }
  .views span { width: 60px; padding-top: 2px; display: flex; align-items: center; justify-content: center; }
  .views .lit { background: #cbd8f0; }
  .views .lit:nth-child(2) { padding-left: 2px; }
  .views .bulb { width: 67px; gap: 8px; margin-left: 4px; }
  .zoom { display: grid; align-items: center; margin-left: 12px; grid-template-columns: 67px 30px 228px 31px 17px; font-size: 19.5px; }

  .taskbar { display: flex; height: 50px; background: #0a0a0b; color: #f2f2f2; flex: none; }
  .start { width: 70px; padding: 12px 0 0 15px; }
  .task { display: flex; align-items: center; border-bottom: 3px solid #78aee4; gap: 7px; padding: 3px 0 0 8px; font-size: 20.7px; }
  .task em { font-style: normal; }
  .t1 { width: 248px; margin-right: 15px; padding-left: 10px; gap: 8px; }
  .t2 { width: 249px; margin-right: 8px; gap: 5px; }
  .t3 { width: 262px; margin-right: 9px; padding-left: 13px; background: #3b3b3e; }
  .t4 { width: 248px; padding-left: 6px; }
  .tray { margin-left: auto; padding-top: 1px; display: grid; align-items: center; grid-template-columns: 38px 39px 42px 37px 81px 61px 7px; font-size: 20px; }
  .tray i { width: 1px; height: 49px; background: #55555a; }

  .ime { position: absolute; left: 1898px; top: 242px; width: 242px; height: 35px; background: #fdfeff; border: 2px solid #b9c6cc; display: grid; align-items: center; padding: 0 0 3px 2px; grid-template-columns: 36px 37px 36px 24px 38px 31px 23px; }
  .ime b { color: #4a84cd; font-size: 26px; line-height: 28px; font-weight: 700; }
  .meter { position: absolute; left: 1993px; top: 295px; width: 196px; height: 98px; }
  .net { position: absolute; left: 50px; top: 15px; width: 145px; height: 69px; border-radius: 0 35px 35px 0; background: #2c2e3b; color: #fff; display: grid; grid-template: 35px 34px / 14px 66px; align-items: center; padding: 1px 0 0 51px; box-shadow: 0 0 8px #7779; }
  .net span { text-align: right; font-size: 20px; }
  .net small { font-size: 16px; color: #c3c3cb; }
  .dial { position: absolute; left: 0; top: 0; width: 98px; height: 98px; border-radius: 50%; background: #50525ff2; border: 2px solid #33343e; display: flex; align-items: baseline; padding: 20px 0 0 20px; color: #fff; font: 300 38px/50px 'Open Sans', sans-serif; letter-spacing: 0; box-shadow: 0 0 8px #7779; }
  .dial small { font-size: 17px; font-weight: 400; }
  .arc { position: absolute; left: -2px; top: -2px; }
</style>
